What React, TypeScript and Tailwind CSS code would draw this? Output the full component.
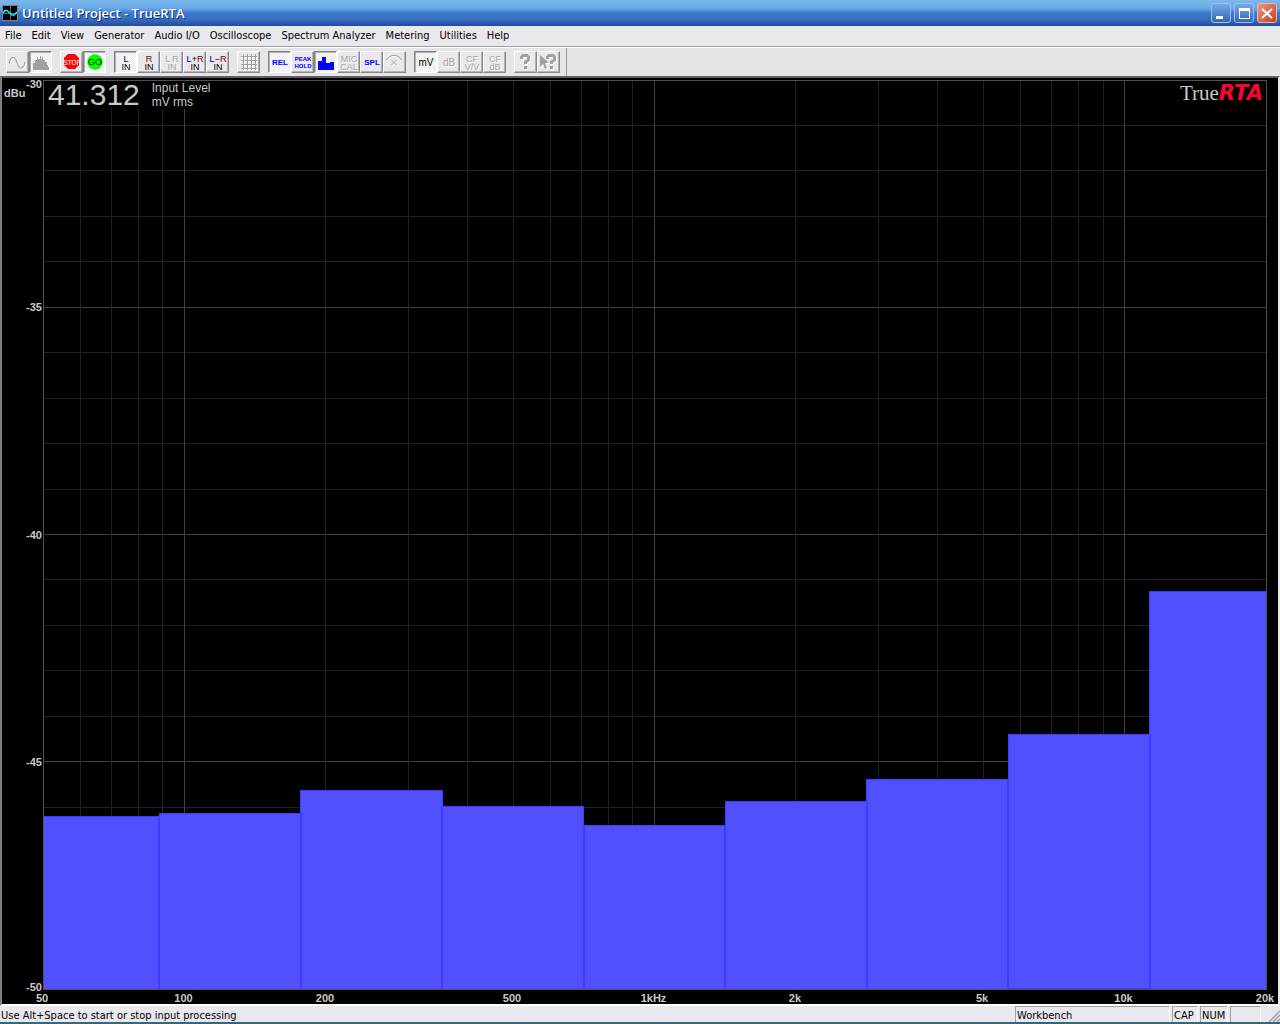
import React from 'react';
import clsx from 'clsx';

const MENUS = [
  'File',
  'Edit',
  'View',
  'Generator',
  'Audio I/O',
  'Oscilloscope',
  'Spectrum Analyzer',
  'Metering',
  'Utilities',
  'Help',
];

const F_MIN = 50;
const F_MAX = 20000;
const DB_MAX = -30;
const DB_MIN = -50;

const BANDS = [
  { from: 50, to: 88.4, db: -46.2 },
  { from: 88.4, to: 176.8, db: -46.13 },
  { from: 176.8, to: 353.6, db: -45.63 },
  { from: 353.6, to: 707.1, db: -45.98 },
  { from: 707.1, to: 1414.2, db: -46.4 },
  { from: 1414.2, to: 2828.4, db: -45.87 },
  { from: 2828.4, to: 5656.9, db: -45.38 },
  { from: 5656.9, to: 11313.7, db: -44.39 },
  { from: 11313.7, to: 20000, db: -41.25 },
];

const MAJOR_FREQS = [100, 1000, 10000];
const MINOR_FREQS = [
  60, 70, 80, 90, 200, 300, 400, 500, 600, 700, 800, 900, 2000, 3000, 4000, 5000, 6000, 7000, 8000, 9000,
];

const FREQ_LABELS = [
  { f: 50, text: '50' },
  { f: 100, text: '100' },
  { f: 200, text: '200' },
  { f: 500, text: '500' },
  { f: 1000, text: '1kHz' },
  { f: 2000, text: '2k' },
  { f: 5000, text: '5k' },
  { f: 10000, text: '10k' },
  { f: 20000, text: '20k' },
];

const xPct = (f: number) => (Math.log(f / F_MIN) / Math.log(F_MAX / F_MIN)) * 100;
const yPct = (db: number) => ((DB_MAX - db) / (DB_MAX - DB_MIN)) * 100;

type ToolProps = { label: string; pressed?: boolean; disabled?: boolean; children: React.ReactNode };

const Tool: React.FC<ToolProps> = ({ label, pressed, disabled, children }) => (
  <button
    type="button"
    aria-label={label}
    aria-pressed={pressed}
    disabled={disabled}
    className={clsx(
      'flex h-[22px] w-[23px] shrink-0 items-center justify-center border pt-[2px] pl-px font-["Liberation_Sans",sans-serif] text-[9px] leading-[8px]',
      pressed
        ? 'border-t-[#848488] border-l-[#848488] border-r-white border-b-white bg-[repeating-conic-gradient(#fff_0_25%,#e9e8ec_0_50%)] bg-[length:2px_2px] shadow-[inset_1px_1px_0_#b0b0b4]'
        : 'border-t-white border-l-white border-r-[#88888c] border-b-[#88888c] bg-[#e9e8ec] shadow-[inset_-1px_-1px_0_#b4b3b8]',
      disabled && 'text-[#a0a0a4] [text-shadow:1px_1px_#fff]',
    )}
  >
    {children}
  </button>
);

const Group: React.FC<{ children: React.ReactNode }> = ({ children }) => <div className="flex">{children}</div>;

const TwoLine: React.FC<{ top: React.ReactNode; bottom: string }> = ({ top, bottom }) => (
  <span className="flex flex-col items-center whitespace-nowrap">
    <span>{top}</span>
    <span>{bottom}</span>
  </span>
);

const Left = () => <span className="text-[#000080]">L</span>;
const Right = () => <span className="text-[#800000]">R</span>;

const Icon: React.FC<{ embossed?: boolean; children: React.ReactNode }> = ({ embossed, children }) => (
  <svg
    width="18"
    height="18"
    viewBox="0 0 18 18"
    className={clsx('shrink-0', embossed && 'drop-shadow-[1px_1px_0_#fff]')}
  >
    {children}
  </svg>
);

const SineIcon = () => (
  <Icon embossed>
    <path d="M0 10L1 6L3 3.5H5L7 6L9 11L11 14H13L15 11.5L16 8" fill="none" stroke="#a0a0a4" strokeWidth="1.2" />
  </Icon>
);

const SpectrumIcon = () => (
  <Icon embossed>
    <path
      d="M1 16V9H3V6H5V3H6V5H8V2H9V5H10V3H11V6H13V8H15V11H16V13H17V16Z"
      fill="#a0a0a4"
      shapeRendering="crispEdges"
    />
  </Icon>
);

const StopIcon = () => (
  <Icon>
    <path d="M5 0H12L16 4V11L12 15H5L1 11V4Z" fill="#ff0000" />
    <text x="9" y="11" textAnchor="middle" fill="#fff" className="font-['DejaVu_Sans_Condensed','DejaVu_Sans',sans-serif] text-[7px]">
      STOP
    </text>
  </Icon>
);

const GoIcon = () => (
  <Icon>
    <circle cx="9" cy="8" r="7.7" fill="#00ff00" />
    <text x="9" y="11" textAnchor="middle" fill="#002000" className="font-['Liberation_Sans',sans-serif] text-[9px]">
      GO
    </text>
  </Icon>
);

const GridIcon = () => (
  <Icon embossed>
    <path
      d="M3.5 0V16M7.5 0V16M11.5 0V16M15.5 0V16M1 2.5H17M1 6.5H17M1 10.5H17M1 14.5H17"
      stroke="#a0a0a4"
      shapeRendering="crispEdges"
    />
  </Icon>
);

const BarsIcon = () => (
  <Icon>
    <path d="M1 16V7H5V3H9V9H13V8H17V16Z" fill="#0000ff" shapeRendering="crispEdges" />
  </Icon>
);

const CurveIcon = () => (
  <Icon embossed>
    <path d="M0 6L3 3L6 1.5H10L13 3L16 6M5.5 6L10.5 11M10.5 6L5.5 11" fill="none" stroke="#a0a0a4" />
  </Icon>
);

const Question: React.FC<{ x: number }> = ({ x }) => (
  <g transform={`translate(${x} 0)`}>
    <path d="M1.5 5V3L3 1.5H7L8.5 3V6L5.5 8V10" fill="none" stroke="#a0a0a4" strokeWidth="3" />
    <rect x="4" y="12" width="3" height="3" fill="#a0a0a4" />
  </g>
);

const HelpIcon = () => (
  <Icon embossed>
    <Question x={3} />
  </Icon>
);

const ContextHelpIcon = () => (
  <Icon embossed>
    <path d="M0 1V13L3 10L5 15L7 14L5 9H9Z" fill="#a0a0a4" />
    <Question x={6} />
  </Icon>
);

const WindowButton: React.FC<{ label: string; close?: boolean; children: React.ReactNode }> = ({
  label,
  close,
  children,
}) => (
  <button
    type="button"
    aria-label={label}
    className={clsx(
      'h-5 w-5 rounded-[3px] border',
      close
        ? 'border-[#e8b8b0] bg-linear-to-br from-[#e89880] to-[#c83c18]'
        : 'border-[#9cc0ec] bg-linear-to-b from-[#78a8e4] to-[#3468b8]',
    )}
  >
    <svg width="18" height="18" viewBox="1 1 18 18">
      {children}
    </svg>
  </button>
);

const TitleBar = () => (
  <header className="flex h-[26px] shrink-0 items-center bg-[linear-gradient(#7ab8ec_0px,#6aa8e6_8px,#4e92dc_11px,#3c78ca_13px,#3a72c4_18px,#2a55a8_24px,#23479c_26px)] pr-[3px] pl-[2px]">
    <svg width="16" height="16" viewBox="0 0 16 16">
      <rect width="16" height="16" fill="#808080" />
      <path d="M1 1H15V15H1Z" fill="#000" />
      <path d="M8.5 1V15M1 8.5H15" stroke="#606060" />
      <path d="M1 8L3 5.5H5L10 10H12L15 7" fill="none" stroke="#00ffff" strokeWidth="1.5" />
    </svg>
    <h1 className="ml-1 font-['Open_Sans',sans-serif] text-[13px] leading-4 font-semibold text-white [text-shadow:1px_1px_#12307c]">
      Untitled Project - TrueRTA
    </h1>
    <div className="ml-auto flex gap-[3px]">
      <WindowButton label="Minimize">
        <rect x="5" y="13" width="7" height="3" fill="#fff" />
      </WindowButton>
      <WindowButton label="Maximize">
        <path d="M5 5H16V16H5ZM6 8V15H15V8Z" fill="#fff" fillRule="evenodd" />
      </WindowButton>
      <WindowButton label="Close" close>
        <path d="M5 6L15 15M15 6L5 15" stroke="#fff" strokeWidth="2" />
      </WindowButton>
    </div>
  </header>
);

const Toolbar = () => (
  <div className="flex h-7 shrink-0 bg-[#e6e5e9]">
    <div className="flex items-center gap-[8px] border-r border-[#98989c] pr-[6px] pl-[6px]">
      <Group>
        <Tool label="Generator" disabled><SineIcon /></Tool>
        <Tool label="Spectrum" pressed disabled><SpectrumIcon /></Tool>
      </Group>
      <Group>
        <Tool label="Stop"><StopIcon /></Tool>
        <Tool label="Go" pressed><GoIcon /></Tool>
      </Group>
      <Group>
        <Tool label="Left input" pressed><TwoLine top={<Left />} bottom="IN" /></Tool>
        <Tool label="Right input"><TwoLine top={<Right />} bottom="IN" /></Tool>
        <Tool label="Left and right inputs" disabled><TwoLine top="L R" bottom="IN" /></Tool>
        <Tool label="Left plus right"><TwoLine top={<><Left />+<Right /></>} bottom="IN" /></Tool>
        <Tool label="Left minus right"><TwoLine top={<><Left />−<Right /></>} bottom="IN" /></Tool>
      </Group>
      <Group>
        <Tool label="Grid" disabled><GridIcon /></Tool>
      </Group>
      <Group>
        <Tool label="Relative" pressed><span className="text-[8px] font-bold text-[#0000ff]">REL</span></Tool>
        <Tool label="Peak hold"><span className="text-[6px] leading-[7px] font-bold text-[#0000ff]"><TwoLine top="PEAK" bottom="HOLD" /></span></Tool>
        <Tool label="Bar mode" pressed><BarsIcon /></Tool>
        <Tool label="Mic calibration" disabled><TwoLine top="MIC" bottom="CAL" /></Tool>
        <Tool label="Sound pressure level"><span className="text-[8px] font-bold text-[#0000ff]">SPL</span></Tool>
        <Tool label="Crossover" disabled><CurveIcon /></Tool>
      </Group>
      <Group>
        <Tool label="Millivolts" pressed><span className="text-[10px]">mV</span></Tool>
        <Tool label="Decibels" disabled><span className="text-[10px]">dB</span></Tool>
        <Tool label="Crest factor ratio" disabled><TwoLine top="CF" bottom="V/V" /></Tool>
        <Tool label="Crest factor dB" disabled><TwoLine top="CF" bottom="dB" /></Tool>
      </Group>
      <Group>
        <Tool label="Help" disabled><HelpIcon /></Tool>
        <Tool label="Context help" disabled><ContextHelpIcon /></Tool>
      </Group>
    </div>
  </div>
);

const Analyzer = () => (
  <main className="flex min-h-0 flex-1 flex-col border-2 border-t-[#606064] border-r-[#e9e8ec] border-b-white border-l-[#808084] bg-black">
    <div className="flex min-h-0 flex-1 pt-[2px] pr-3 pb-[15px]">
      <div className="w-[41px] shrink-0 pt-[6px] pl-[2px] font-['Liberation_Sans',sans-serif] text-[11px] leading-[14px] font-bold text-[#c8c8c8]">
        dBu
      </div>
      <div className="relative min-w-0 flex-1">
        <svg className="block h-full w-full overflow-visible" shapeRendering="crispEdges" role="img" aria-label="Octave spectrum, dBu">
          {Array.from({ length: 19 }, (_, i) => -31 - i).map((db) => (
            <line key={db} x1="0%" x2="100%" y1={`${yPct(db)}%`} y2={`${yPct(db)}%`} stroke={db % 5 === 0 ? '#404040' : '#202020'} />
          ))}
          {MINOR_FREQS.map((f) => (
            <line key={f} x1={`${xPct(f)}%`} x2={`${xPct(f)}%`} y1="0%" y2="100%" stroke="#202020" />
          ))}
          {MAJOR_FREQS.map((f) => (
            <line key={f} x1={`${xPct(f)}%`} x2={`${xPct(f)}%`} y1="0%" y2="100%" stroke="#404040" />
          ))}
          {BANDS.map((b) => (
            <rect
              key={b.from}
              x={`${xPct(b.from)}%`}
              y={`${yPct(b.db)}%`}
              width={`${xPct(b.to) - xPct(b.from)}%`}
              height={`${100 - yPct(b.db)}%`}
              fill="#5050ff"
              stroke="#3c3cff"
            />
          ))}
          {/* the lower neighbour decides how tall the shared edge is */}
          {BANDS.slice(1).map((b, i) => {
            const y = yPct(Math.min(b.db, BANDS[i].db));
            return (
              <line key={b.from} x1={`${xPct(b.from)}%`} x2={`${xPct(b.from)}%`} y1={`${y}%`} y2="100%" stroke="#3c3cff" strokeWidth="2" />
            );
          })}
          <rect width="100%" height="100%" fill="none" stroke="#505050" />
          <g className="font-['Liberation_Sans',sans-serif] text-[11px] font-bold" fill="#c8c8c8">
            {[-30, -35, -40, -45, -50].map((db) => (
              <text key={db} x="-1" y={`${yPct(db)}%`} dy={db === -30 ? 8 : db === -50 ? 2 : 4} textAnchor="end">
                {db}
              </text>
            ))}
            {FREQ_LABELS.map((l) => (
              <text key={l.f} x={`${xPct(l.f)}%`} y="100%" dx="-1" dy="13" textAnchor="middle">
                {l.text}
              </text>
            ))}
          </g>
        </svg>
        <div className="absolute top-[1px] left-[1px] flex gap-3 bg-black pr-3 pl-1 font-['Liberation_Sans',sans-serif] text-[#c8c8c8]">
          <output className="text-[30px] leading-7">41.312</output>
          <div className="text-[12px] leading-[14px]">
            <div>Input Level</div>
            <div>mV rms</div>
          </div>
        </div>
        <div className="absolute top-[1px] right-[3px] flex items-baseline leading-6">
          <span className="font-['Liberation_Serif',serif] text-[21px] text-[#c8c8c8]">True</span>
          <span className="font-['DejaVu_Sans',sans-serif] text-[21px] font-bold text-[#ff0030] italic">RTA</span>
        </div>
      </div>
    </div>
  </main>
);

const Pane: React.FC<{ className: string; children?: React.ReactNode }> = ({ className, children }) => (
  <p className={clsx('border border-t-[#a0a0a4] border-r-white border-b-0 border-l-[#a0a0a4]', className)}>{children}</p>
);

const StatusBar = () => (
  <footer className="flex h-[18px] shrink-0 items-stretch gap-[2px] border-b-2 border-[#30687c] bg-[#e9e8ec] pl-[1px] font-['DejaVu_Sans_Condensed','DejaVu_Sans',sans-serif] text-[11px] leading-[18px]">
    <p className="flex-1 pt-px whitespace-nowrap">Use Alt+Space to start or stop input processing</p>
    <Pane className="w-[155px] pl-px">Workbench</Pane>
    <Pane className="w-[26px] pl-px">CAP</Pane>
    <Pane className="w-[28px] pl-px">NUM</Pane>
    <Pane className="w-[31px]" />
    <svg width="17" height="16" viewBox="0 0 17 16" className="shrink-0" stroke="#a0a0a4" strokeWidth="1.5">
      <path d="M6 16L17 5M10 16L17 9M14 16L17 13" />
    </svg>
  </footer>
);

const App: React.FC = () => (
  <div className="flex h-screen flex-col overflow-hidden bg-[#e9e8ec] text-black">
    <TitleBar />
    <nav className="flex h-5 shrink-0 items-center bg-[#e9e8ec] font-['DejaVu_Sans_Condensed','DejaVu_Sans',sans-serif] text-[11px] leading-4">
      {MENUS.map((m) => (
        <button key={m} type="button" className="px-[5px] whitespace-nowrap">
          {m}
        </button>
      ))}
    </nav>
    <div className="h-[2px] shrink-0 border-t border-[#a0a0a4] bg-white" />
    <Toolbar />
    <Analyzer />
    <StatusBar />
  </div>
);

export default App;
